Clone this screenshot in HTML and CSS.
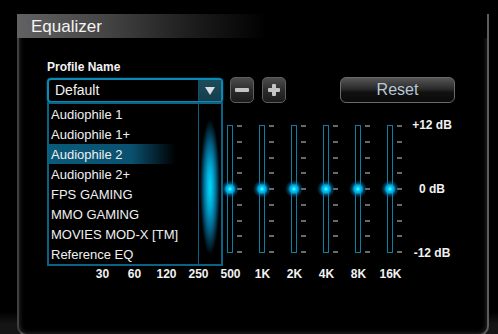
FILE: index.html
```html
<!DOCTYPE html>
<html>
<head>
    <title>Equalizer</title>
    <link rel="stylesheet" href="styles.css">
</head>
<body>
    <div class="panel">
        <div class="title">Equalizer</div>

        <div class="content">
            <div class="label">Profile Name</div>

            <div class="controls">
                <div class="select">
                    <span class="value">Default</span>
                    <span class="arrow"></span>
                    <div class="menu">
                        <ul class="options">
                            <li>Audiophile 1</li>
                            <li>Audiophile 1+</li>
                            <li class="selected">Audiophile 2</li>
                            <li>Audiophile 2+</li>
                            <li>FPS GAMING</li>
                            <li>MMO GAMING</li>
                            <li>MOVIES MOD-X [TM]</li>
                            <li>Reference EQ</li>
                        </ul>
                        <div class="scroll"><span class="thumb"></span></div>
                    </div>
                </div>
                <button class="icon-btn" title="Remove profile">
                    <svg width="14" height="14" viewBox="0 0 14 14"><rect x="0" y="5" width="14" height="4" rx="1" fill="#c4c4c4"/></svg>
                </button>
                <button class="icon-btn" title="Add profile">
                    <svg width="12" height="12" viewBox="0 0 12 12"><rect x="0" y="4" width="12" height="4" rx="1" fill="#c4c4c4"/><rect x="4" y="0" width="4" height="12" rx="1" fill="#c4c4c4"/></svg>
                </button>
                <button class="reset">Reset</button>
            </div>

            <div class="eq">
                <div class="bands">
                    <div class="band"><div class="slider"><div class="track"><span class="knob"></span></div><div class="ticks"><i></i><i></i><i></i><i></i><i></i><i></i><i></i><i></i><i></i></div></div><div class="freq">30</div></div>
                    <div class="band"><div class="slider"><div class="track"><span class="knob"></span></div><div class="ticks"><i></i><i></i><i></i><i></i><i></i><i></i><i></i><i></i><i></i></div></div><div class="freq">60</div></div>
                    <div class="band"><div class="slider"><div class="track"><span class="knob"></span></div><div class="ticks"><i></i><i></i><i></i><i></i><i></i><i></i><i></i><i></i><i></i></div></div><div class="freq">120</div></div>
                    <div class="band"><div class="slider"><div class="track"><span class="knob"></span></div><div class="ticks"><i></i><i></i><i></i><i></i><i></i><i></i><i></i><i></i><i></i></div></div><div class="freq">250</div></div>
                    <div class="band"><div class="slider"><div class="track"><span class="knob"></span></div><div class="ticks"><i></i><i></i><i></i><i></i><i></i><i></i><i></i><i></i><i></i></div></div><div class="freq">500</div></div>
                    <div class="band"><div class="slider"><div class="track"><span class="knob"></span></div><div class="ticks"><i></i><i></i><i></i><i></i><i></i><i></i><i></i><i></i><i></i></div></div><div class="freq">1K</div></div>
                    <div class="band"><div class="slider"><div class="track"><span class="knob"></span></div><div class="ticks"><i></i><i></i><i></i><i></i><i></i><i></i><i></i><i></i><i></i></div></div><div class="freq">2K</div></div>
                    <div class="band"><div class="slider"><div class="track"><span class="knob"></span></div><div class="ticks"><i></i><i></i><i></i><i></i><i></i><i></i><i></i><i></i><i></i></div></div><div class="freq">4K</div></div>
                    <div class="band"><div class="slider"><div class="track"><span class="knob"></span></div><div class="ticks"><i></i><i></i><i></i><i></i><i></i><i></i><i></i><i></i><i></i></div></div><div class="freq">8K</div></div>
                    <div class="band"><div class="slider"><div class="track"><span class="knob"></span></div><div class="ticks"><i></i><i></i><i></i><i></i><i></i><i></i><i></i><i></i><i></i></div></div><div class="freq">16K</div></div>
                </div>
                <div class="scale">
                    <span>+12 dB</span>
                    <span>0 dB</span>
                    <span>-12 dB</span>
                </div>
            </div>
        </div>
    </div>
</body>
</html>
```

FILE: styles.css
```css
html {
    background: linear-gradient(to bottom, #000 0, #000 312px, #151515 324px);
}
body {
    margin: 0;
    width: 498px;
    height: 334px;
    overflow: hidden;
    font-family: "Liberation Sans", Arial, sans-serif;
    color: #f2f2f2;
}
.panel {
    margin-left: 17px;
    width: 468px;
    height: 320px;
    background: #000;
    border: 2px solid #5c5c5c;
    border-left-color: #404040;
    border-top: 0;
    border-radius: 0 0 10px 10px;
    box-shadow: inset 0 0 4px 1px #262626;
}
.title {
    margin: 14px 0 0 -2px;
    height: 24px;
    padding-left: 14px;
    font-size: 17px;
    line-height: 25px;
    color: #f4f4f4;
    background: linear-gradient(to right, #626262 0, #444 90px, #1a1a1a 180px, #000 250px);
}
.content {
    padding-left: 28px;
}
.label {
    margin-top: 22px;
    font-size: 12px;
    font-weight: bold;
    line-height: 14px;
}
.controls {
    display: flex;
    align-items: center;
    margin-top: 3px;
    height: 26px;
}
.select {
    position: relative;
    box-sizing: border-box;
    width: 176px;
    height: 25px;
    display: flex;
    border: 2px solid #0a8ab5;
    border-radius: 4px;
    box-shadow: 0 0 2px #0a6f93;
}
.value {
    flex: 1;
    padding-left: 6px;
    font-size: 14px;
    line-height: 21px;
}
.arrow {
    width: 22px;
    border-left: 1px solid #0a5470;
    background: linear-gradient(#1d4c5c, #163d4b);
    position: relative;
}
.arrow::after {
    content: "";
    position: absolute;
    left: 6px;
    top: 7px;
    border-left: 5px solid transparent;
    border-right: 5px solid transparent;
    border-top: 8px solid #d8dde0;
}
.menu {
    position: absolute;
    top: 22px;
    left: -2px;
    box-sizing: border-box;
    width: 176px;
    height: 164px;
    display: flex;
    background: #000;
    border: 2px solid #0a6284;
    z-index: 2;
}
.options {
    flex: 1;
    list-style: none;
    margin: 0;
    padding: 0;
}
.options li {
    height: 20px;
    padding-left: 2px;
    font-size: 13px;
    line-height: 21px;
    color: #f0f0f0;
}
.options .selected {
    background: linear-gradient(to right, #0a5a79 0, #0a5170 55%, rgba(0, 0, 0, 0) 85%);
}
.scroll {
    width: 22px;
    border-left: 1px solid #0a6284;
    display: flex;
    align-items: center;
    justify-content: center;
}
.thumb {
    width: 22px;
    height: 140px;
    margin-top: 6px;
    background: radial-gradient(ellipse 10px 68px at center, #00dcf4 0, #00acd8 30%, #04648a 62%, rgba(0, 40, 60, 0) 100%);
}
.icon-btn {
    box-sizing: border-box;
    width: 24px;
    height: 26px;
    margin-left: 7px;
    padding: 0;
    display: flex;
    align-items: center;
    justify-content: center;
    border: 1px solid #5e5e5e;
    border-radius: 5px;
    background: linear-gradient(#4c4c4c, #2a2a2a 55%, #1a1a1a);
}
.icon-btn + .icon-btn {
    margin-left: 8px;
}
.reset {
    box-sizing: border-box;
    width: 115px;
    height: 26px;
    margin-left: 54px;
    padding: 0;
    border: 1px solid #6a6a6a;
    border-radius: 6px;
    background: linear-gradient(#565656, #2a2a2a 45%, #111 60%, #0a0a0a);
    color: #b9c8d6;
    font-family: "Liberation Sans", Arial, sans-serif;
    font-size: 16px;
    line-height: 24px;
}
.eq {
    display: flex;
    margin: 22px 0 0 39px;
}
.bands {
    display: flex;
}
.band {
    width: 32px;
}
.slider {
    display: flex;
    gap: 4px;
    height: 128px;
    padding-left: 13px;
}
.track {
    position: relative;
    box-sizing: border-box;
    width: 6px;
    border: 1px solid #0a7ea3;
}
.knob {
    position: absolute;
    left: -7px;
    top: 54px;
    width: 18px;
    height: 18px;
    background: radial-gradient(circle, #8ef4ff 0, #00cfff 2px, #00a6d8 4px, rgba(0, 120, 180, 0.5) 6px, rgba(0, 80, 130, 0) 9px);
}
.ticks {
    display: flex;
    flex-direction: column;
    justify-content: space-between;
}
.ticks i {
    display: block;
    width: 5px;
    height: 2px;
    background: #6a6a6a;
}
.freq {
    margin-top: 14px;
    text-align: center;
    font-size: 12px;
    font-weight: bold;
    line-height: 14px;
    padding-left: 1px;
}
.scale {
    display: flex;
    flex-direction: column;
    justify-content: space-between;
    width: 46px;
    height: 142px;
    margin: -7px 0 0 3px;
    font-size: 12px;
    font-weight: bold;
    line-height: 14px;
    text-align: center;
}
```
